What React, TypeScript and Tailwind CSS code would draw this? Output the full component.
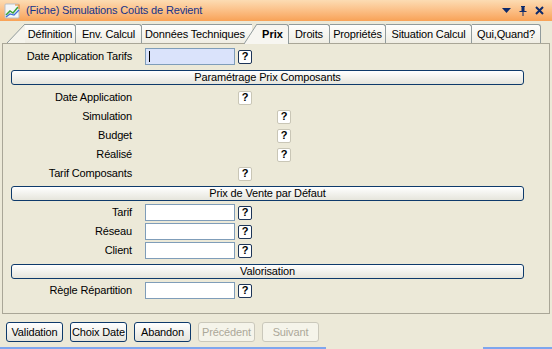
import React from 'react'

const font = { fontFamily: '"Liberation Sans", Arial, sans-serif' }

function Help({ dark = true }: { dark?: boolean }) {
  return (
    <div
      className={`flex h-[14px] w-[14px] items-center justify-center rounded-[2px] border bg-white text-[11px] font-bold leading-none text-black ${
        dark ? 'border-[#1d3558]' : 'border-[#c9c6b6]'
      }`}
    >
      ?
    </div>
  )
}

function Field({ focused = false }: { focused?: boolean }) {
  return (
    <div
      className={`relative h-[17px] w-[90px] border border-[#7f9db9] ${focused ? 'bg-[#dae3fb]' : 'bg-white'}`}
    >
      {focused && <div className="absolute left-[3px] top-[2px] h-[11px] w-px bg-black" />}
    </div>
  )
}

function Label({ text }: { text: string }) {
  return <div className="w-[129px] text-right tracking-[-0.15px]">{text}</div>
}

function Section({ title }: { title: string }) {
  return (
    <div className="ml-[8px] flex h-[15px] w-[513px] items-center justify-center rounded-[3px] border border-[#0e3a6b] bg-gradient-to-b from-white to-[#e6e5dc] tracking-[-0.15px]">
      {title}
    </div>
  )
}

function InputRow({ label, focused }: { label: string; focused?: boolean }) {
  return (
    <div className="flex h-[17px] items-center">
      <Label text={label} />
      <div className="ml-[13px]">
        <Field focused={focused} />
      </div>
      <div className="ml-[3px]">
        <Help />
      </div>
    </div>
  )
}

function HelpRow({ label, far }: { label: string; far?: boolean }) {
  return (
    <div className="flex h-[19px] items-center">
      <Label text={label} />
      <div className={far ? 'ml-[145px]' : 'ml-[106px]'}>
        <Help dark={false} />
      </div>
    </div>
  )
}

function Slant({ w, h }: { w: number; h: number }) {
  return (
    <svg width={w} height={h} className="block shrink-0">
      <polygon points={`0,${h} ${w},0 ${w},${h}`} fill="#f5f4ec" />
      <line x1="0" y1={h} x2={w} y2="0" stroke="#919b9c" strokeWidth="1" />
    </svg>
  )
}

function Tab({ text, width }: { text: string; width: number }) {
  return (
    <div
      style={{ width }}
      className="flex h-[19px] shrink-0 items-center justify-center overflow-hidden whitespace-nowrap rounded-tr-[3px] border-r border-t border-[#919b9c] bg-gradient-to-b from-[#fefefd] to-[#efede3] tracking-[-0.15px]"
    >
      {text}
    </div>
  )
}

function Button({ text, disabled }: { text: string; disabled?: boolean }) {
  return (
    <div
      className={`flex h-[20px] w-[57px] items-center justify-center rounded-[3px] border tracking-[-0.15px] ${
        disabled
          ? 'border-[#cac8bb] bg-[#f5f4ea] text-[#aca899]'
          : 'border-[#0e3a6b] bg-gradient-to-b from-white to-[#e5e4dc] text-black'
      }`}
    >
      {text}
    </div>
  )
}

export default function App() {
  return (
    <div style={font} className="h-[349px] w-[552px] overflow-hidden bg-[#ece9d8] text-[11px] text-black">
      {/* Title bar */}
      <div className="flex h-[21px] items-center bg-gradient-to-b from-[#fcdcb3] to-[#f8a256]">
        <svg width="17" height="16" viewBox="0 0 17 16" className="ml-[4px]">
          <rect x="1" y="1" width="14" height="14" rx="1" fill="#f4f6f8" stroke="#b9c0c8" />
          <path d="M2 12 L6 8 L9 10 L14 4" fill="none" stroke="#3aa13a" strokeWidth="1.5" />
          <path d="M2 14 L6 11 L10 12 L15 7" fill="none" stroke="#3b6fd8" strokeWidth="1.2" />
          <path d="M11 2 L15 2 L15 6" fill="none" stroke="#f08a24" strokeWidth="1.2" />
        </svg>
        <div className="ml-[5px] text-[#15338a] tracking-[-0.15px]">(Fiche) Simulations Coûts de Revient</div>
        <div className="ml-auto mr-[8px] flex items-center gap-[8px]">
          <svg width="9" height="6" viewBox="0 0 9 6">
            <polygon points="0,0 9,0 4.5,5" fill="#0d2a6b" />
          </svg>
          <svg width="8" height="10" viewBox="0 0 8 10">
            <path d="M2 0 H6 V1 H5.5 V5 H7.5 V6 H0.5 V5 H2.5 V1 H2 Z" fill="#0d2a6b" />
            <rect x="3.5" y="6" width="1" height="4" fill="#0d2a6b" />
          </svg>
          <svg width="9" height="9" viewBox="0 0 9 9">
            <path d="M1 1 L8 8 M8 1 L1 8" stroke="#0d2a6b" strokeWidth="2" />
          </svg>
        </div>
      </div>

      {/* Tabs */}
      <div className="flex h-[22px] items-end pl-[7px]">
        <Slant w={18} h={19} />
        <Tab text="Définition" width={51} />
        <Tab text="Env. Calcul" width={66} />
        <div className="flex h-[19px] w-[110px] shrink-0 items-center overflow-hidden whitespace-nowrap border-t border-[#919b9c] bg-gradient-to-b from-[#fefefd] to-[#efede3] pl-[3px] tracking-[-0.15px]">
          Données Techniques
        </div>
        <div className="relative z-10 -ml-[8px] flex translate-y-px items-end">
          <svg width="13" height="20" className="block shrink-0">
            <polygon points="0,20 13,0 13,20" fill="#f7f6f1" />
            <line x1="0" y1="20" x2="13" y2="0" stroke="#919b9c" strokeWidth="1" />
          </svg>
          <div className="flex h-[20px] w-[32px] shrink-0 items-center justify-center rounded-tr-[3px] border-r border-t border-[#919b9c] bg-[#f7f6f1] font-bold">
            Prix
          </div>
        </div>
        <Tab text="Droits" width={41} />
        <Tab text="Propriétés" width={56} />
        <Tab text="Situation Calcul" width={86} />
        <Tab text="Qui,Quand?" width={69} />
      </div>

      {/* Panel */}
      <div className="ml-[2px] flex h-[271px] w-[548px] flex-col border border-[#a9a697] pt-[4px]">
        <InputRow label="Date Application Tarifs" focused />
        <div className="mt-[5px]">
          <Section title="Paramétrage Prix Composants" />
        </div>
        <div className="mt-[3px] flex flex-col">
          <HelpRow label="Date Application" />
          <HelpRow label="Simulation" far />
          <HelpRow label="Budget" far />
          <HelpRow label="Réalisé" far />
          <HelpRow label="Tarif Composants" />
        </div>
        <div className="mt-[3px]">
          <Section title="Prix de Vente par Défaut" />
        </div>
        <div className="mt-[3px] flex flex-col gap-[2px]">
          <InputRow label="Tarif" />
          <InputRow label="Réseau" />
          <InputRow label="Client" />
        </div>
        <div className="mt-[5px]">
          <Section title="Valorisation" />
        </div>
        <div className="mt-[3px]">
          <InputRow label="Règle Répartition" />
        </div>
      </div>

      {/* Buttons */}
      <div className="ml-[6px] mt-[8px] flex gap-[7px]">
        <Button text="Validation" />
        <Button text="Choix Date" />
        <Button text="Abandon" />
        <Button text="Précédent" disabled />
        <Button text="Suivant" disabled />
      </div>

      {/* Bottom frame edge */}
      <div className="mt-[5px] flex h-[2px]">
        <div className="w-[326px] bg-[#7ea6ee]" />
        <div className="w-[157px]" />
        <div className="flex-1 bg-[#7ea6ee]" />
      </div>
    </div>
  )
}
